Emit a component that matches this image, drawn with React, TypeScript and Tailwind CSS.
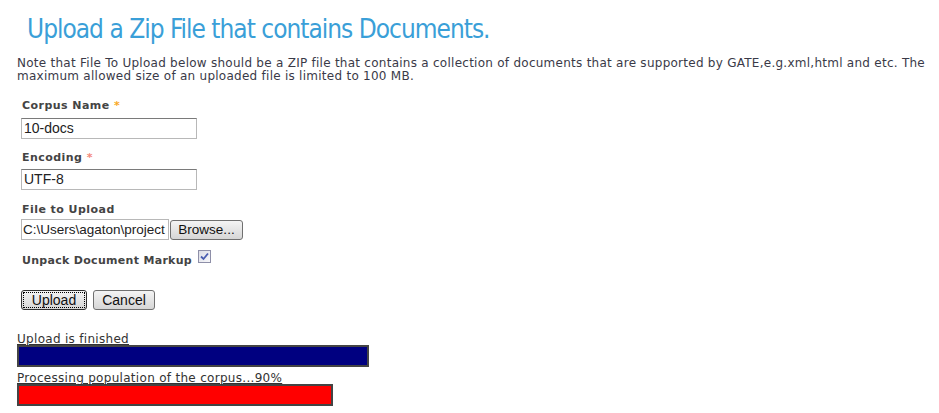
import React from "react";

export default function App() {
  return (
    <div className="w-[939px] h-[413px] bg-white overflow-hidden text-[#333] font-['DejaVu_Sans',Verdana,sans-serif]">
      <h1 className="pl-[27px] pt-[14px] text-[26px] leading-[30px] text-[#3a9fd8] font-normal font-['DejaVu_Sans_Condensed','DejaVu_Sans',Tahoma,sans-serif] tracking-[-1px]">
        Upload a Zip File that contains Documents.
      </h1>
      <p className="mt-[13px] pl-[17px] text-[12px] leading-[13px] tracking-[0.26px] text-[#3a3a48] whitespace-nowrap">
        Note that File To Upload below should be a ZIP file that contains a collection of documents that are supported by GATE,e.g.xml,html and etc. The
        <br />
        maximum allowed size of an uploaded file is limited to 100 MB.
      </p>
      <div className="pl-[21px] mt-[16px] flex flex-col">
        <label className="pl-[1px] text-[11px] leading-[14px] font-bold text-[#444] tracking-[0.45px]">
          Corpus Name <span className="text-[#f9a825]">*</span>
        </label>
        <input
          readOnly
          value="10-docs"
          className="mt-[5px] w-[176px] h-[21px] border border-[#b8b8b8] border-t-[#7a7a7a] px-[2px] text-[14px] text-[#222] font-['Liberation_Sans',Arial,sans-serif] outline-none"
        />
        <label className="pl-[1px] mt-[12px] text-[11px] leading-[14px] font-bold text-[#444] tracking-[0.45px]">
          Encoding <span className="text-[#f48a7a]">*</span>
        </label>
        <input
          readOnly
          value="UTF-8"
          className="mt-[4px] w-[176px] h-[21px] border border-[#b8b8b8] border-t-[#7a7a7a] px-[2px] text-[14px] text-[#222] font-['Liberation_Sans',Arial,sans-serif] outline-none"
        />
        <label className="pl-[1px] mt-[13px] text-[11px] leading-[14px] font-bold text-[#444] tracking-[0.45px]">
          File to Upload
        </label>
        <div className="mt-[2px] flex items-center">
          <div className="w-[148px] h-[21px] border border-[#b8b8b8] pl-[1px] text-[13.5px] leading-[19px] text-[#222] font-['Liberation_Sans',Arial,sans-serif] overflow-hidden whitespace-nowrap">
            C:\Users\agaton\project
          </div>
          <button className="ml-[1px] w-[73px] h-[20px] rounded-[3px] border border-[#707070] bg-gradient-to-b from-[#f4f4f4] to-[#d6d6d6] text-[13.5px] leading-[18px] text-[#111] font-['Liberation_Sans',Arial,sans-serif]">
            Browse...
          </button>
        </div>
        <div className="mt-[10px] flex items-start">
          <span className="pl-[1px] mt-[4px] text-[11px] leading-[14px] font-bold text-[#444] tracking-[0.3px]">Unpack Document Markup</span>
          <span className="ml-[6px] w-[13px] h-[13px] border border-[#8e8fa8] bg-gradient-to-br from-[#dcdde6] to-[#f7f7fa] flex items-center justify-center">
            <svg width="9" height="9" viewBox="0 0 9 9">
              <path d="M1 4.5 L3.5 7 L8 1.5" stroke="#4a5db0" strokeWidth="1.8" fill="none" />
            </svg>
          </span>
        </div>
        <div className="mt-[22px] flex items-center gap-[6px]">
          <button className="w-[66px] h-[20px] rounded-[3px] border border-[#303030] bg-gradient-to-b from-[#f4f4f4] to-[#d6d6d6] text-[14px] leading-[18px] text-[#111] font-['Liberation_Sans',Arial,sans-serif] p-[1px]">
            <span className="block border border-dotted border-black leading-[14px]">Upload</span>
          </button>
          <button className="w-[62px] h-[20px] rounded-[3px] border border-[#707070] bg-gradient-to-b from-[#f4f4f4] to-[#d6d6d6] text-[14px] leading-[18px] text-[#111] font-['Liberation_Sans',Arial,sans-serif]">
            Cancel
          </button>
        </div>
      </div>
      <div className="pl-[17px] mt-[23px] text-[12px] text-[#333] tracking-[0.3px]">
        <div className="leading-[12px] underline underline-offset-[1px]">Upload is finished</div>
        <div className="w-[352px] h-[22px] bg-[#000080] border-2 border-[#444]" />
        <div className="mt-[5px] leading-[12px] underline underline-offset-[1px]">Processing population of the corpus...90%</div>
        <div className="w-[316px] h-[22px] bg-[#ff0000] border-2 border-[#444]" />
      </div>
    </div>
  );
}
